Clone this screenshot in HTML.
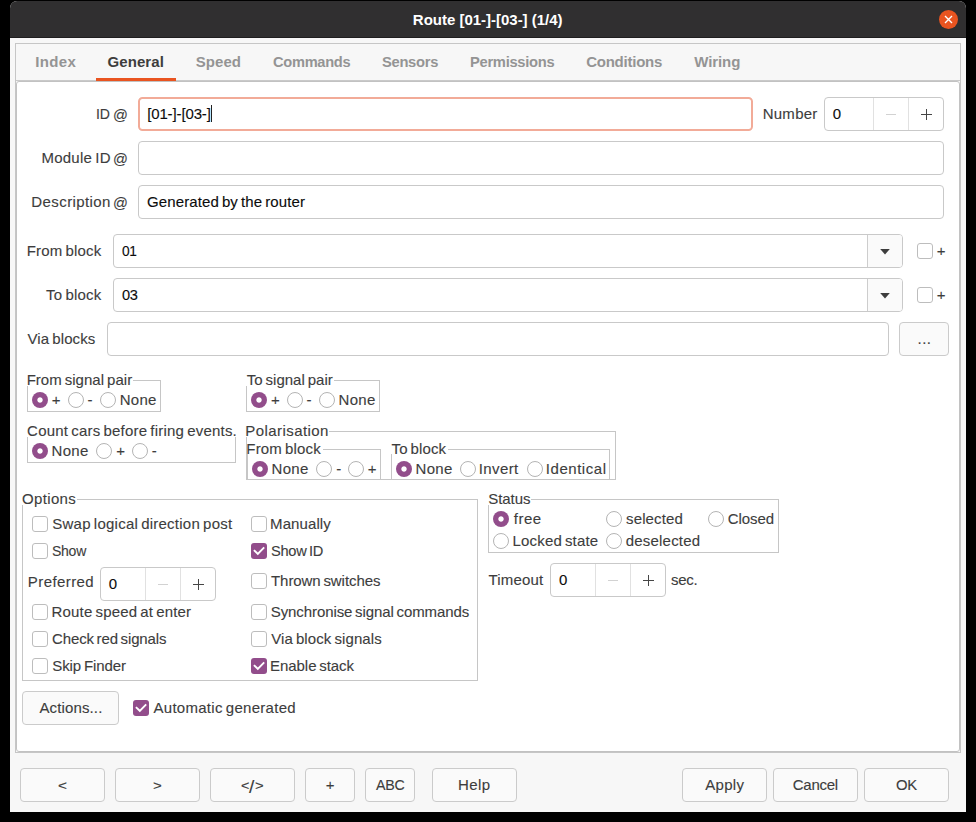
<!DOCTYPE html>
<html><head><meta charset="utf-8"><title>Route</title>
<style>
html,body{margin:0;padding:0;}
body{width:976px;height:822px;background:#000;position:relative;overflow:hidden;font-family:"Liberation Sans",sans-serif;}
.a{position:absolute;box-sizing:border-box;}
.t{position:absolute;transform-origin:0 0;white-space:pre;line-height:20px;font-family:"Liberation Sans",sans-serif;-webkit-text-stroke:0.12px currentColor;}
.win{left:10px;top:1px;width:956px;height:811px;background:#f7f7f7;border-radius:7px 7px 0 0;}
.tb{left:10px;top:1px;width:956px;height:37px;background:#302f30;border-radius:7px 7px 0 0;border-bottom:1px solid #1f1e1f;}
.close{left:938.5px;top:9.5px;width:19px;height:19px;border-radius:50%;background:#e95420;}
.nb{left:15px;top:43px;width:946px;height:710px;border:1px solid #c6c6c6;background:#f7f7f7;}
.nbc{left:16px;top:81px;width:944px;height:671px;background:#fff;border:1px solid #c2c2c2;border-radius:3px;}
.nbl{left:16px;top:80px;width:944px;height:1px;background:#c9c9c9;}
.ul{left:96px;top:78px;width:80px;height:3px;background:#e95420;}
.entry{background:#fff;border:1px solid #c9c9c9;border-radius:4px;}
.entry.focus{border:2px solid #f2ab98;border-radius:4.5px;}
.btn{background:#fafafa;border:1px solid #cbcbcb;border-radius:4px;}
.frame{border:1px solid #c6c6c6;}
.lblbg{background:#fff;}
.vl{width:1px;background:#e1e1e1;}
.radio{width:16px;height:16px;border-radius:50%;border:1px solid #b4b4b4;background:#fff;}
.radio.on{border:none;background:radial-gradient(circle at 50% 50%,#fff 0,#fff 2.2px,#924d8b 3.1px);}
.chk{width:16px;height:16px;border-radius:3px;border:1px solid #bdbdbd;background:#fff;}
.chk.on{border:none;background:#924d8b;}

</style></head>
<body>
<div class="a win"></div>
<div class="a tb"></div>
<div class="a close"><svg width="19" height="19" viewBox="0 0 19 19" style="position:absolute;left:0;top:0"><path d="M6 6 L13 13 M13 6 L6 13" stroke="#fff" stroke-width="1.4" fill="none"/></svg></div>
<div class="a nb"></div>
<div class="a nbc"></div>
<div class="a nbl"></div>
<div class="a ul"></div>
<div class="a entry focus" style="left:138px;top:97px;width:615px;height:34px"></div>
<div class="a" style="left:211px;top:105px;width:1px;height:17px;background:#222"></div>
<div class="a entry " style="left:824px;top:97px;width:120px;height:34px"></div>
<div class="a vl" style="left:873px;top:98px;height:32px;background:#e1e1e1"></div>
<div class="a vl" style="left:908px;top:98px;height:32px;background:#e1e1e1"></div>
<div class="a" style="left:886px;top:114px;width:10px;height:1px;background:#d2d2d2"></div>
<div class="a" style="left:921px;top:114px;width:11px;height:1px;background:#464646"></div>
<div class="a" style="left:926px;top:109px;width:1px;height:11px;background:#464646"></div>
<div class="a entry " style="left:138px;top:141px;width:806px;height:34px"></div>
<div class="a entry " style="left:138px;top:185px;width:806px;height:34px"></div>
<div class="a entry " style="left:113px;top:234px;width:790px;height:34px"></div>
<div class="a" style="left:867px;top:235px;width:35px;height:32px;background:#fafafa;border-left:1px solid #cdcdcd;border-radius:0 3px 3px 0"></div>
<div class="a entry " style="left:113px;top:278px;width:790px;height:34px"></div>
<div class="a" style="left:867px;top:279px;width:35px;height:32px;background:#fafafa;border-left:1px solid #cdcdcd;border-radius:0 3px 3px 0"></div>
<svg class="a" style="left:880px;top:249px" width="10" height="6" viewBox="0 0 10 6"><path d="M0.2 0 L9.8 0 L5 5.6 Z" fill="#3d3d3d"/></svg>
<div class="a chk" style="left:917px;top:243px"></div>
<svg class="a" style="left:880px;top:293px" width="10" height="6" viewBox="0 0 10 6"><path d="M0.2 0 L9.8 0 L5 5.6 Z" fill="#3d3d3d"/></svg>
<div class="a chk" style="left:917px;top:287px"></div>
<div class="a entry " style="left:107px;top:322px;width:782px;height:34px"></div>
<div class="a btn" style="left:899px;top:322px;width:50px;height:34px"></div>
<div class="a frame" style="left:27px;top:380px;width:134px;height:32px"></div>
<div class="a lblbg" style="left:27px;top:372px;width:106px;height:14px"></div>
<div class="a radio on" style="left:32px;top:392px"></div>
<div class="a radio" style="left:68px;top:392px"></div>
<div class="a radio" style="left:100px;top:392px"></div>
<div class="a frame" style="left:246px;top:380px;width:134px;height:32px"></div>
<div class="a lblbg" style="left:246px;top:372px;width:88px;height:14px"></div>
<div class="a radio on" style="left:251px;top:392px"></div>
<div class="a radio" style="left:287px;top:392px"></div>
<div class="a radio" style="left:319px;top:392px"></div>
<div class="a frame" style="left:27px;top:431px;width:209px;height:32px"></div>
<div class="a lblbg" style="left:27px;top:423px;width:209px;height:14px"></div>
<div class="a radio on" style="left:32px;top:443px"></div>
<div class="a radio" style="left:96px;top:443px"></div>
<div class="a radio" style="left:132px;top:443px"></div>
<div class="a frame" style="left:246px;top:431px;width:370px;height:49px"></div>
<div class="a lblbg" style="left:246px;top:423px;width:83px;height:14px"></div>
<div class="a" style="left:247px;top:449px;width:134px;height:30px;border:1px solid #c6c6c6;border-bottom:none"></div>
<div class="a lblbg" style="left:247px;top:441px;width:76px;height:13px"></div>
<div class="a radio on" style="left:252px;top:461px"></div>
<div class="a radio" style="left:316px;top:461px"></div>
<div class="a radio" style="left:348px;top:461px"></div>
<div class="a" style="left:391px;top:449px;width:219px;height:30px;border:1px solid #c6c6c6;border-bottom:none"></div>
<div class="a lblbg" style="left:391px;top:441px;width:57px;height:13px"></div>
<div class="a radio on" style="left:396px;top:461px"></div>
<div class="a radio" style="left:460px;top:461px"></div>
<div class="a radio" style="left:527px;top:461px"></div>
<div class="a frame" style="left:22px;top:499px;width:456px;height:182px"></div>
<div class="a lblbg" style="left:22px;top:491px;width:55px;height:14px"></div>
<div class="a chk" style="left:32px;top:516px"></div>
<div class="a chk" style="left:32px;top:543px"></div>
<div class="a entry " style="left:100px;top:567px;width:116px;height:34px"></div>
<div class="a vl" style="left:145px;top:568px;height:32px;background:#e1e1e1"></div>
<div class="a vl" style="left:180px;top:568px;height:32px;background:#e1e1e1"></div>
<div class="a" style="left:158px;top:584px;width:10px;height:1px;background:#d2d2d2"></div>
<div class="a" style="left:193px;top:584px;width:11px;height:1px;background:#464646"></div>
<div class="a" style="left:198px;top:579px;width:1px;height:11px;background:#464646"></div>
<div class="a chk" style="left:32px;top:604px"></div>
<div class="a chk" style="left:32px;top:631px"></div>
<div class="a chk" style="left:32px;top:658px"></div>
<div class="a chk" style="left:251px;top:516px"></div>
<div class="a chk on" style="left:251px;top:543px"><svg width="16" height="16" viewBox="0 0 16 16" style="position:absolute;left:0;top:0"><path d="M2.9 7.1 L6.8 10.8 L13.2 4.4" stroke="#fff" stroke-width="1.9" fill="none" stroke-linecap="butt" stroke-linejoin="miter"/></svg></div>
<div class="a chk" style="left:251px;top:573px"></div>
<div class="a chk" style="left:251px;top:604px"></div>
<div class="a chk" style="left:251px;top:631px"></div>
<div class="a chk on" style="left:251px;top:658px"><svg width="16" height="16" viewBox="0 0 16 16" style="position:absolute;left:0;top:0"><path d="M2.9 7.1 L6.8 10.8 L13.2 4.4" stroke="#fff" stroke-width="1.9" fill="none" stroke-linecap="butt" stroke-linejoin="miter"/></svg></div>
<div class="a frame" style="left:488px;top:499px;width:291px;height:54px"></div>
<div class="a lblbg" style="left:488px;top:491px;width:43px;height:14px"></div>
<div class="a radio on" style="left:493px;top:511px"></div>
<div class="a radio" style="left:606px;top:511px"></div>
<div class="a radio" style="left:708px;top:511px"></div>
<div class="a radio" style="left:493px;top:533px"></div>
<div class="a radio" style="left:606px;top:533px"></div>
<div class="a entry " style="left:550px;top:563px;width:116px;height:34px"></div>
<div class="a vl" style="left:595px;top:564px;height:32px;background:#e1e1e1"></div>
<div class="a vl" style="left:630px;top:564px;height:32px;background:#e1e1e1"></div>
<div class="a" style="left:608px;top:580px;width:10px;height:1px;background:#d2d2d2"></div>
<div class="a" style="left:643px;top:580px;width:11px;height:1px;background:#464646"></div>
<div class="a" style="left:648px;top:575px;width:1px;height:11px;background:#464646"></div>
<div class="a btn" style="left:22px;top:691px;width:97px;height:34px"></div>
<div class="a chk on" style="left:133px;top:700px"><svg width="16" height="16" viewBox="0 0 16 16" style="position:absolute;left:0;top:0"><path d="M2.9 7.1 L6.8 10.8 L13.2 4.4" stroke="#fff" stroke-width="1.9" fill="none" stroke-linecap="butt" stroke-linejoin="miter"/></svg></div>
<div class="a btn" style="left:20px;top:768px;width:85px;height:34px"></div>
<div class="a btn" style="left:115px;top:768px;width:85px;height:34px"></div>
<div class="a btn" style="left:210px;top:768px;width:85px;height:34px"></div>
<div class="a btn" style="left:305px;top:768px;width:50px;height:34px"></div>
<div class="a btn" style="left:365px;top:768px;width:50px;height:34px"></div>
<div class="a btn" style="left:432px;top:768px;width:85px;height:34px"></div>
<div class="a btn" style="left:682px;top:768px;width:85px;height:34px"></div>
<div class="a btn" style="left:773px;top:768px;width:85px;height:34px"></div>
<div class="a btn" style="left:864px;top:768px;width:85px;height:34px"></div>
<span class="t" style="left:412.86px;top:10px;font-size:15px;font-weight:700;color:#ffffff;-webkit-text-stroke:0;letter-spacing:-0.015px;">Route [01-]-[03-] (1/4)</span>
<span class="t" style="left:35.26px;top:52px;font-size:15px;font-weight:700;color:#949494;-webkit-text-stroke:0;letter-spacing:0.366px;">Index</span>
<span class="t" style="left:107.53px;top:52px;font-size:15px;font-weight:700;color:#3d3d3d;-webkit-text-stroke:0;letter-spacing:0.082px;">General</span>
<span class="t" style="left:195.77px;top:52px;font-size:15px;font-weight:700;color:#949494;-webkit-text-stroke:0;letter-spacing:0.045px;">Speed</span>
<span class="t" style="left:272.54px;top:52px;font-size:15px;font-weight:700;color:#949494;-webkit-text-stroke:0;letter-spacing:-0.300px;transform:scaleX(0.9758);">Commands</span>
<span class="t" style="left:382.27px;top:52px;font-size:15px;font-weight:700;color:#949494;-webkit-text-stroke:0;letter-spacing:-0.300px;transform:scaleX(0.9814);">Sensors</span>
<span class="t" style="left:469.58px;top:52px;font-size:15px;font-weight:700;color:#949494;-webkit-text-stroke:0;letter-spacing:-0.300px;transform:scaleX(0.9815);">Permissions</span>
<span class="t" style="left:586.13px;top:52px;font-size:15px;font-weight:700;color:#949494;-webkit-text-stroke:0;letter-spacing:-0.227px;">Conditions</span>
<span class="t" style="left:694.30px;top:52px;font-size:15px;font-weight:700;color:#949494;-webkit-text-stroke:0;letter-spacing:-0.093px;">Wiring</span>
<span class="t" style="left:95.50px;top:104px;font-size:15px;font-weight:400;color:#3d3d3d;letter-spacing:-0.300px;transform:scaleX(0.9379);">ID</span>
<span class="t" style="left:112.55px;top:105px;font-size:15.5px;font-weight:400;color:#3d3d3d;transform:scaleX(0.9459);">@</span>
<span class="t" style="left:147.16px;top:104px;font-size:15px;font-weight:400;color:#0c0c0c;letter-spacing:-0.130px;">[01-]-[03-]</span>
<span class="t" style="left:762.63px;top:104px;font-size:15px;font-weight:400;color:#3d3d3d;letter-spacing:0.279px;">Number</span>
<span class="t" style="left:832.83px;top:104px;font-size:15px;font-weight:400;color:#0c0c0c;">0</span>
<span class="t" style="left:41.43px;top:148px;font-size:15px;font-weight:400;color:#3d3d3d;word-spacing:-1.3px;letter-spacing:0.253px;">Module ID</span>
<span class="t" style="left:112.55px;top:149px;font-size:15.5px;font-weight:400;color:#3d3d3d;transform:scaleX(0.9459);">@</span>
<span class="t" style="left:31.33px;top:192px;font-size:15px;font-weight:400;color:#3d3d3d;letter-spacing:0.408px;">Description</span>
<span class="t" style="left:112.55px;top:193px;font-size:15.5px;font-weight:400;color:#3d3d3d;transform:scaleX(0.9459);">@</span>
<span class="t" style="left:147.05px;top:192px;font-size:15px;font-weight:400;color:#0c0c0c;word-spacing:-1.3px;letter-spacing:0.112px;">Generated by the router</span>
<span class="t" style="left:26.63px;top:241px;font-size:15px;font-weight:400;color:#3d3d3d;word-spacing:-1.3px;letter-spacing:0.195px;">From block</span>
<span class="t" style="left:122.07px;top:241px;font-size:15px;font-weight:400;color:#0c0c0c;letter-spacing:-0.300px;transform:scaleX(0.9146);">01</span>
<span class="t" style="left:46.07px;top:285px;font-size:15px;font-weight:400;color:#3d3d3d;word-spacing:-1.3px;letter-spacing:0.210px;">To block</span>
<span class="t" style="left:122.04px;top:285px;font-size:15px;font-weight:400;color:#0c0c0c;letter-spacing:-0.300px;transform:scaleX(0.9734);">03</span>
<span class="t" style="left:936.80px;top:241px;font-size:15px;font-weight:400;color:#3d3d3d;">+</span>
<span class="t" style="left:936.80px;top:285px;font-size:15px;font-weight:400;color:#3d3d3d;">+</span>
<span class="t" style="left:27.40px;top:329px;font-size:15px;font-weight:400;color:#3d3d3d;word-spacing:-1.3px;letter-spacing:0.131px;">Via blocks</span>
<span class="t" style="left:917.58px;top:329px;font-size:15px;font-weight:400;color:#3d3d3d;letter-spacing:0.387px;">...</span>
<span class="t" style="left:26.63px;top:370px;font-size:15px;font-weight:400;color:#3d3d3d;word-spacing:-1.3px;letter-spacing:0.041px;">From signal pair</span>
<span class="t" style="left:51.70px;top:390px;font-size:15px;font-weight:400;color:#3d3d3d;">+</span>
<span class="t" style="left:87.53px;top:390px;font-size:15px;font-weight:400;color:#3d3d3d;">-</span>
<span class="t" style="left:119.73px;top:390px;font-size:15px;font-weight:400;color:#3d3d3d;letter-spacing:0.273px;">None</span>
<span class="t" style="left:246.77px;top:370px;font-size:15px;font-weight:400;color:#3d3d3d;word-spacing:-1.3px;letter-spacing:0.017px;">To signal pair</span>
<span class="t" style="left:270.90px;top:390px;font-size:15px;font-weight:400;color:#3d3d3d;">+</span>
<span class="t" style="left:306.53px;top:390px;font-size:15px;font-weight:400;color:#3d3d3d;">-</span>
<span class="t" style="left:338.53px;top:390px;font-size:15px;font-weight:400;color:#3d3d3d;letter-spacing:0.307px;">None</span>
<span class="t" style="left:27.10px;top:421px;font-size:15px;font-weight:400;color:#3d3d3d;word-spacing:-1.3px;letter-spacing:0.207px;">Count cars before firing events.</span>
<span class="t" style="left:51.53px;top:441px;font-size:15px;font-weight:400;color:#3d3d3d;letter-spacing:0.340px;">None</span>
<span class="t" style="left:116.20px;top:441px;font-size:15px;font-weight:400;color:#3d3d3d;">+</span>
<span class="t" style="left:151.63px;top:441px;font-size:15px;font-weight:400;color:#3d3d3d;">-</span>
<span class="t" style="left:245.33px;top:421px;font-size:15px;font-weight:400;color:#3d3d3d;letter-spacing:0.422px;">Polarisation</span>
<span class="t" style="left:246.33px;top:439px;font-size:15px;font-weight:400;color:#3d3d3d;word-spacing:-1.3px;letter-spacing:0.173px;">From block</span>
<span class="t" style="left:271.53px;top:459px;font-size:15px;font-weight:400;color:#3d3d3d;letter-spacing:0.340px;">None</span>
<span class="t" style="left:336.13px;top:459px;font-size:15px;font-weight:400;color:#3d3d3d;">-</span>
<span class="t" style="left:367.80px;top:459px;font-size:15px;font-weight:400;color:#3d3d3d;">+</span>
<span class="t" style="left:391.52px;top:439px;font-size:15px;font-weight:400;color:#3d3d3d;word-spacing:-1.3px;letter-spacing:0.110px;">To block</span>
<span class="t" style="left:415.58px;top:459px;font-size:15px;font-weight:400;color:#3d3d3d;letter-spacing:0.307px;">None</span>
<span class="t" style="left:478.83px;top:459px;font-size:15px;font-weight:400;color:#3d3d3d;letter-spacing:0.371px;">Invert</span>
<span class="t" style="left:545.83px;top:459px;font-size:15px;font-weight:400;color:#3d3d3d;letter-spacing:0.536px;">Identical</span>
<span class="t" style="left:22.05px;top:489px;font-size:15px;font-weight:400;color:#3d3d3d;letter-spacing:0.330px;">Options</span>
<span class="t" style="left:52.28px;top:514px;font-size:15px;font-weight:400;color:#3d3d3d;word-spacing:-1.3px;letter-spacing:0.239px;">Swap logical direction post</span>
<span class="t" style="left:52.31px;top:541px;font-size:15px;font-weight:400;color:#3d3d3d;letter-spacing:-0.300px;transform:scaleX(0.9357);">Show</span>
<span class="t" style="left:27.83px;top:572px;font-size:15px;font-weight:400;color:#3d3d3d;letter-spacing:0.411px;">Preferred</span>
<span class="t" style="left:108.78px;top:574px;font-size:15px;font-weight:400;color:#0c0c0c;">0</span>
<span class="t" style="left:51.58px;top:602px;font-size:15px;font-weight:400;color:#3d3d3d;word-spacing:-1.3px;letter-spacing:0.174px;">Route speed at enter</span>
<span class="t" style="left:52.05px;top:629px;font-size:15px;font-weight:400;color:#3d3d3d;word-spacing:-1.3px;letter-spacing:-0.138px;">Check red signals</span>
<span class="t" style="left:52.28px;top:656px;font-size:15px;font-weight:400;color:#3d3d3d;word-spacing:-1.3px;letter-spacing:-0.077px;">Skip Finder</span>
<span class="t" style="left:270.08px;top:514px;font-size:15px;font-weight:400;color:#3d3d3d;letter-spacing:0.092px;">Manually</span>
<span class="t" style="left:270.79px;top:541px;font-size:15px;font-weight:400;color:#3d3d3d;word-spacing:-1.3px;letter-spacing:-0.300px;transform:scaleX(0.9743);">Show ID</span>
<span class="t" style="left:271.02px;top:571px;font-size:15px;font-weight:400;color:#3d3d3d;word-spacing:-1.3px;letter-spacing:-0.068px;">Thrown switches</span>
<span class="t" style="left:270.78px;top:602px;font-size:15px;font-weight:400;color:#3d3d3d;word-spacing:-1.3px;letter-spacing:-0.092px;">Synchronise signal commands</span>
<span class="t" style="left:271.25px;top:629px;font-size:15px;font-weight:400;color:#3d3d3d;word-spacing:-1.3px;letter-spacing:0.101px;">Via block signals</span>
<span class="t" style="left:270.08px;top:656px;font-size:15px;font-weight:400;color:#3d3d3d;word-spacing:-1.3px;letter-spacing:-0.059px;">Enable stack</span>
<span class="t" style="left:488.28px;top:489px;font-size:15px;font-weight:400;color:#3d3d3d;letter-spacing:-0.067px;">Status</span>
<span class="t" style="left:513.75px;top:509px;font-size:15px;font-weight:400;color:#3d3d3d;letter-spacing:0.504px;">free</span>
<span class="t" style="left:626.02px;top:509px;font-size:15px;font-weight:400;color:#3d3d3d;letter-spacing:0.137px;">selected</span>
<span class="t" style="left:727.70px;top:509px;font-size:15px;font-weight:400;color:#3d3d3d;letter-spacing:-0.069px;">Closed</span>
<span class="t" style="left:512.58px;top:531px;font-size:15px;font-weight:400;color:#3d3d3d;word-spacing:-1.3px;letter-spacing:0.161px;">Locked state</span>
<span class="t" style="left:625.78px;top:531px;font-size:15px;font-weight:400;color:#3d3d3d;letter-spacing:0.195px;">deselected</span>
<span class="t" style="left:488.52px;top:570px;font-size:15px;font-weight:400;color:#3d3d3d;letter-spacing:0.176px;">Timeout</span>
<span class="t" style="left:559.03px;top:570px;font-size:15px;font-weight:400;color:#0c0c0c;">0</span>
<span class="t" style="left:671.02px;top:570px;font-size:15px;font-weight:400;color:#3d3d3d;letter-spacing:-0.300px;transform:scaleX(0.9992);">sec.</span>
<span class="t" style="left:39.40px;top:698px;font-size:15px;font-weight:400;color:#3d3d3d;letter-spacing:0.140px;">Actions...</span>
<span class="t" style="left:153.50px;top:698px;font-size:15px;font-weight:400;color:#3d3d3d;word-spacing:-1.3px;letter-spacing:0.276px;">Automatic generated</span>
<span class="t" style="left:57.88px;top:776px;font-size:13.5px;font-weight:400;color:#3d3d3d;transform:scaleX(1.1407);">&lt;</span>
<span class="t" style="left:153.00px;top:776px;font-size:13.5px;font-weight:400;color:#3d3d3d;transform:scaleX(1.1111);">&gt;</span>
<span class="t" style="left:240.72px;top:776px;font-size:13.5px;font-weight:400;color:#3d3d3d;transform:scaleX(1.0667);">&lt;</span>
<span class="t" style="left:248.70px;top:776.5px;font-size:18.7px;font-weight:400;color:#3d3d3d;transform:scaleX(1.0267);">/</span>
<span class="t" style="left:255.11px;top:776px;font-size:13.5px;font-weight:400;color:#3d3d3d;transform:scaleX(1.0963);">&gt;</span>
<span class="t" style="left:325.80px;top:775px;font-size:15px;font-weight:400;color:#3d3d3d;">+</span>
<span class="t" style="left:376.25px;top:775px;font-size:15px;font-weight:400;color:#3d3d3d;letter-spacing:-0.300px;transform:scaleX(0.9505);">ABC</span>
<span class="t" style="left:458.08px;top:775px;font-size:15px;font-weight:400;color:#3d3d3d;letter-spacing:0.393px;">Help</span>
<span class="t" style="left:705.30px;top:775px;font-size:15px;font-weight:400;color:#3d3d3d;letter-spacing:0.295px;">Apply</span>
<span class="t" style="left:792.70px;top:775px;font-size:15px;font-weight:400;color:#3d3d3d;letter-spacing:-0.240px;">Cancel</span>
<span class="t" style="left:895.90px;top:775px;font-size:15px;font-weight:400;color:#3d3d3d;letter-spacing:-0.300px;transform:scaleX(0.9899);">OK</span>
</body></html>
